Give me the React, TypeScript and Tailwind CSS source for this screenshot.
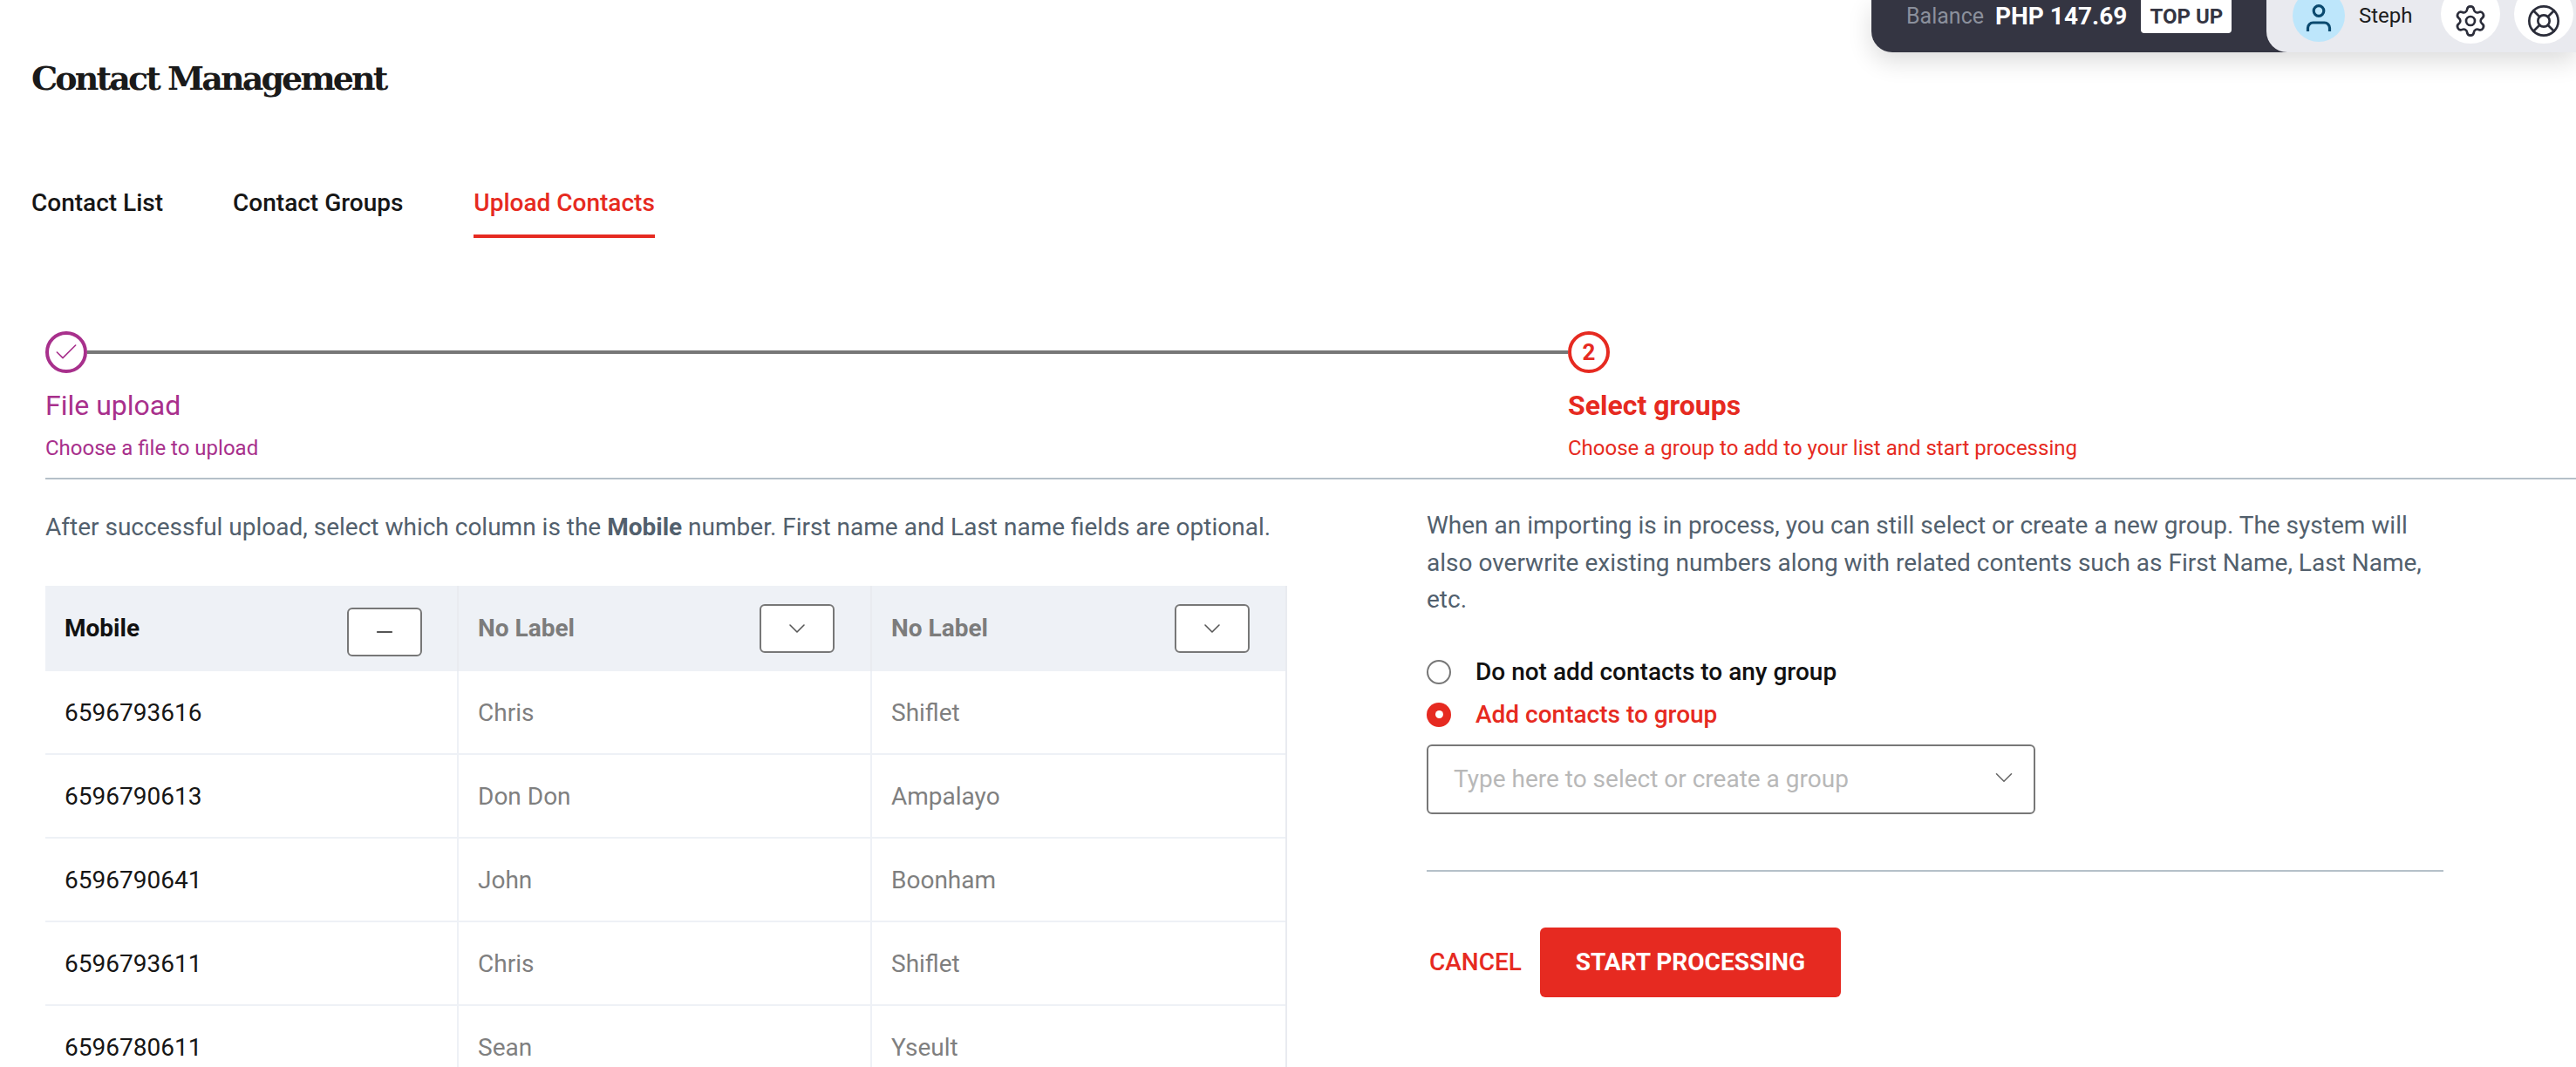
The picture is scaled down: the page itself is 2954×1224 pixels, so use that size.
import React from "react";
import { Check, ChevronDown, LifeBuoy, Minus, Settings } from "lucide-react";

const rows = [
  ["6596793616", "Chris", "Shiflet"],
  ["6596790613", "Don Don", "Ampalayo"],
  ["6596790641", "John", "Boonham"],
  ["6596793611", "Chris", "Shiflet"],
  ["6596780611", "Sean", "Yseult"],
];

const HeaderCell = ({ label, locked }: { label: string; locked?: boolean }) => (
  <div className="flex h-[98px] items-center justify-between border-r-2 border-[#e9ebf0] pl-[22px] pr-[41px] last:border-r-0">
    <span className={`text-[28px] font-bold ${locked ? "text-[#111111]" : "text-[#7c7c7c]"}`}>{label}</span>
    <button
      className={`flex h-[56px] w-[86px] items-center justify-center rounded-[6px] border-2 border-[#777777] bg-white text-[#555555] ${
        locked ? "translate-x-[1px] translate-y-[4px]" : ""
      }`}
    >
      {locked ? <Minus size={28} strokeWidth={1.6} /> : <ChevronDown size={32} strokeWidth={1.2} />}
    </button>
  </div>
);

const App: React.FC = () => {
  return (
    <div className="h-[1224px] w-[2954px] overflow-hidden bg-white font-['Roboto',sans-serif]">
      {/* top bar */}
      <div className="flex h-[60px] justify-end">
        <div className="flex rounded-bl-[24px] shadow-[0_10px_28px_rgba(0,0,0,0.14)]">
          <div className="flex w-[500px] items-start rounded-bl-[24px] bg-[#343542] pl-[40px]">
            <span className="mt-[4px] text-[25px] leading-[30px] text-[#8b909c]">Balance</span>
            <span className="ml-[13px] mt-[3px] text-[28px] font-bold leading-[32px] text-white">PHP 147.69</span>
            <span className="ml-[16px] flex h-[38px] w-[104px] items-center justify-center rounded-b-[4px] bg-white text-[24px] font-bold text-[#343542]">
              TOP UP
            </span>
          </div>
          <div className="relative -ml-[47px] flex w-[355px] items-start overflow-hidden rounded-bl-[24px] bg-[#e9eaef] pl-[30px]">
            <div className="-mt-[12px] flex h-[60px] w-[60px] items-end justify-center rounded-full bg-[#bde6fb] pb-[11px]">
              <svg width="32" height="32" viewBox="0 0 32 32" fill="none" stroke="#0b4a6f" strokeWidth="3.2">
                <circle cx="16" cy="7.5" r="5.8" />
                <path d="M3.5 31v-4a6 6 0 0 1 6-6h13a6 6 0 0 1 6 6v4" />
              </svg>
            </div>
            <span className="ml-[16px] mt-[2px] text-[24px] leading-[32px] text-[#1c1c1c]">Steph</span>
            <div className="-mt-[18px] ml-[32px] flex h-[68px] w-[68px] items-center justify-center rounded-full bg-white pt-[16px]">
              <Settings size={40} strokeWidth={1.6} className="text-[#2b2d3a]" />
            </div>
            <div className="-mt-[18px] ml-[16px] flex h-[68px] w-[68px] items-center justify-center rounded-full bg-white pt-[16px]">
              <LifeBuoy size={40} strokeWidth={1.6} className="text-[#2b2d3a]" />
            </div>
          </div>
        </div>
      </div>

      {/* title */}
      <h1 className="ml-[36px] mt-[8px] font-['DejaVu_Serif',serif] text-[38px] font-bold leading-[44px] tracking-[-2.9px] text-[#1a1a1a]">
        Contact Management
      </h1>

      {/* tabs */}
      <div className="ml-[36px] mt-[103px] flex gap-[80px] text-[28px] font-medium leading-[36px]">
        <span className="text-[#161616]">Contact List</span>
        <span className="text-[#161616]">Contact Groups</span>
        <span className="ml-[1px] border-b-4 border-[#e62a21] pb-[18px] text-[#e62a21]">Upload Contacts</span>
      </div>

      {/* stepper */}
      <div className="ml-[52px] mt-[107px] flex h-[170px] border-b-2 border-[#b5c0c9]">
        <div className="w-[1746px]">
          <div className="flex items-center">
            <div className="flex h-[48px] w-[48px] items-center justify-center rounded-full border-4 border-[#a8308c] text-[#a8308c]">
              <Check size={32} strokeWidth={1.2} />
            </div>
            <div className="h-[4px] flex-1 bg-[#777777]" />
          </div>
          <div className="mt-[17px] text-[32px] leading-[40px] text-[#a8308c]">File upload</div>
          <div className="mt-[14px] text-[24px] leading-[30px] text-[#a8308c]">Choose a file to upload</div>
        </div>
        <div>
          <div className="flex h-[48px] w-[48px] items-center justify-center rounded-full border-4 border-[#e62a21] text-[26px] font-bold text-[#e62a21]">
            2
          </div>
          <div className="mt-[17px] text-[32px] font-bold leading-[40px] text-[#e62a21]">Select groups</div>
          <div className="mt-[14px] text-[24px] leading-[30px] text-[#e62a21]">
            Choose a group to add to your list and start processing
          </div>
        </div>
      </div>

      {/* content */}
      <div className="ml-[52px] flex">
        <div className="w-[1424px] shrink-0">
          <p className="mt-[34px] whitespace-nowrap text-[28px] leading-[42px] text-[#52606d]">
            After successful upload, select which column is the <b>Mobile</b> number. First name and Last name fields are optional.
          </p>
          <div className="mt-[46px] border-r-2 border-[#e9ebf0]">
            <div className="grid grid-cols-3 bg-[#eef1f6]">
              <HeaderCell label="Mobile" locked />
              <HeaderCell label="No Label" />
              <HeaderCell label="No Label" />
            </div>
            {rows.map((row) => (
              <div key={row[0]} className="grid grid-cols-3 border-b-2 border-[#eef1f6] text-[28px]">
                <div className="flex h-[94px] items-center border-r-2 border-[#eef1f6] pl-[22px] pt-[2px] text-[#161616]">{row[0]}</div>
                <div className="flex h-[94px] items-center border-r-2 border-[#eef1f6] pl-[22px] pt-[2px] text-[#7f7f7f]">{row[1]}</div>
                <div className="flex h-[94px] items-center pl-[22px] pt-[2px] text-[#7f7f7f]">{row[2]}</div>
              </div>
            ))}
          </div>
        </div>

        <div className="ml-[160px] w-[1166px]">
          <p className="mt-[32px] w-[1150px] text-[28px] leading-[42.5px] text-[#52606d]">
            When an importing is in process, you can still select or create a new group. The system will also overwrite existing numbers along with related contents such as First Name, Last Name, etc.
          </p>
          <div className="mt-[47px] flex h-[28px] items-center gap-[28px] text-[28px] font-medium text-[#111111]">
            <span className="h-[28px] w-[28px] rounded-full border-2 border-[#777777]" />
            Do not add contacts to any group
          </div>
          <div className="mt-[21px] flex h-[28px] items-center gap-[28px] text-[28px] font-medium text-[#e62a21]">
            <span className="flex h-[28px] w-[28px] items-center justify-center rounded-full bg-[#e62a21]">
              <span className="h-[9px] w-[9px] rounded-full bg-white" />
            </span>
            Add contacts to group
          </div>
          <div className="mt-[20px] flex h-[80px] w-[698px] items-center justify-between rounded-[6px] border-2 border-[#777777] pl-[29px] pr-[17px]">
            <span className="text-[28px] text-[#b8b8b8]">Type here to select or create a group</span>
            <ChevronDown size={34} strokeWidth={1.1} className="-translate-y-[2px] text-[#666666]" />
          </div>
          <div className="mt-[64px] h-[2px] bg-[#b5c0c9]" />
          <div className="mt-[64px] flex items-center">
            <span className="ml-[3px] text-[28px] font-medium text-[#e62a21]">CANCEL</span>
            <button className="ml-[21px] h-[80px] w-[345px] rounded-[6px] bg-[#e62a21] text-[28px] font-bold text-white">
              START PROCESSING
            </button>
          </div>
        </div>
      </div>
    </div>
  );
};

export default App;
